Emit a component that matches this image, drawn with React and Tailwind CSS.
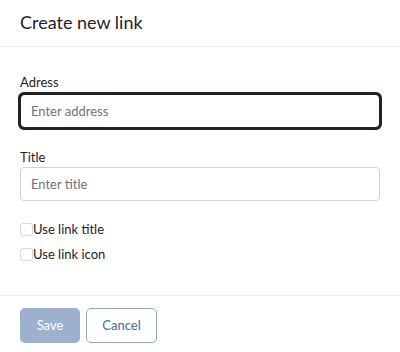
import React from 'react'

const App = () => {
  return (
    <div className="w-[400px] h-[352px] bg-white text-[#1f2329] font-['Lato','Liberation_Sans',sans-serif] overflow-hidden">
      <div className="h-[47px] px-5 pb-[2px] flex items-center border-b border-[#ececec]">
        <h1 className="text-[18px] leading-none">Create new link</h1>
      </div>
      <div className="px-5 pt-[27px] h-[248px]">
        <label className="block text-[13px] leading-[16px] mb-[4px]">Adress</label>
        <input
          className="block w-full h-[34px] px-[10px] text-[13px] rounded-[4px] border border-[#1f2329] outline-[3px] outline-solid outline-[#1f2329] -outline-offset-1 placeholder:text-[#6f747a]"
          placeholder="Enter address"
        />
        <label className="block text-[13px] leading-[16px] mt-[21px] mb-[2px]">Title</label>
        <input
          className="block w-full h-[34px] px-[10px] text-[13px] rounded-[4px] border border-[#cfd2d6] outline-none placeholder:text-[#6f747a]"
          placeholder="Enter title"
        />
        <div className="mt-[22px] flex flex-col gap-[12px]">
          <label className="flex items-center h-[13px] text-[13px] leading-[13px]">
            <span className="w-[13px] h-[13px] rounded-[3px] border border-[#d4d6da]" />
            Use link title
          </label>
          <label className="flex items-center h-[13px] text-[13px] leading-[13px]">
            <span className="w-[13px] h-[13px] rounded-[3px] border border-[#d4d6da]" />
            Use link icon
          </label>
        </div>
      </div>
      <div className="border-t border-[#ececec] px-5 pt-[12px] flex gap-[6px]">
        <button className="w-[60px] h-[35px] rounded-[5px] bg-[#9db1cf] text-white text-[13px]">Save</button>
        <button className="w-[71px] h-[35px] rounded-[5px] border border-[#8ea8cc] text-[#4b6a9a] text-[13px]">Cancel</button>
      </div>
    </div>
  )
}

export default App
